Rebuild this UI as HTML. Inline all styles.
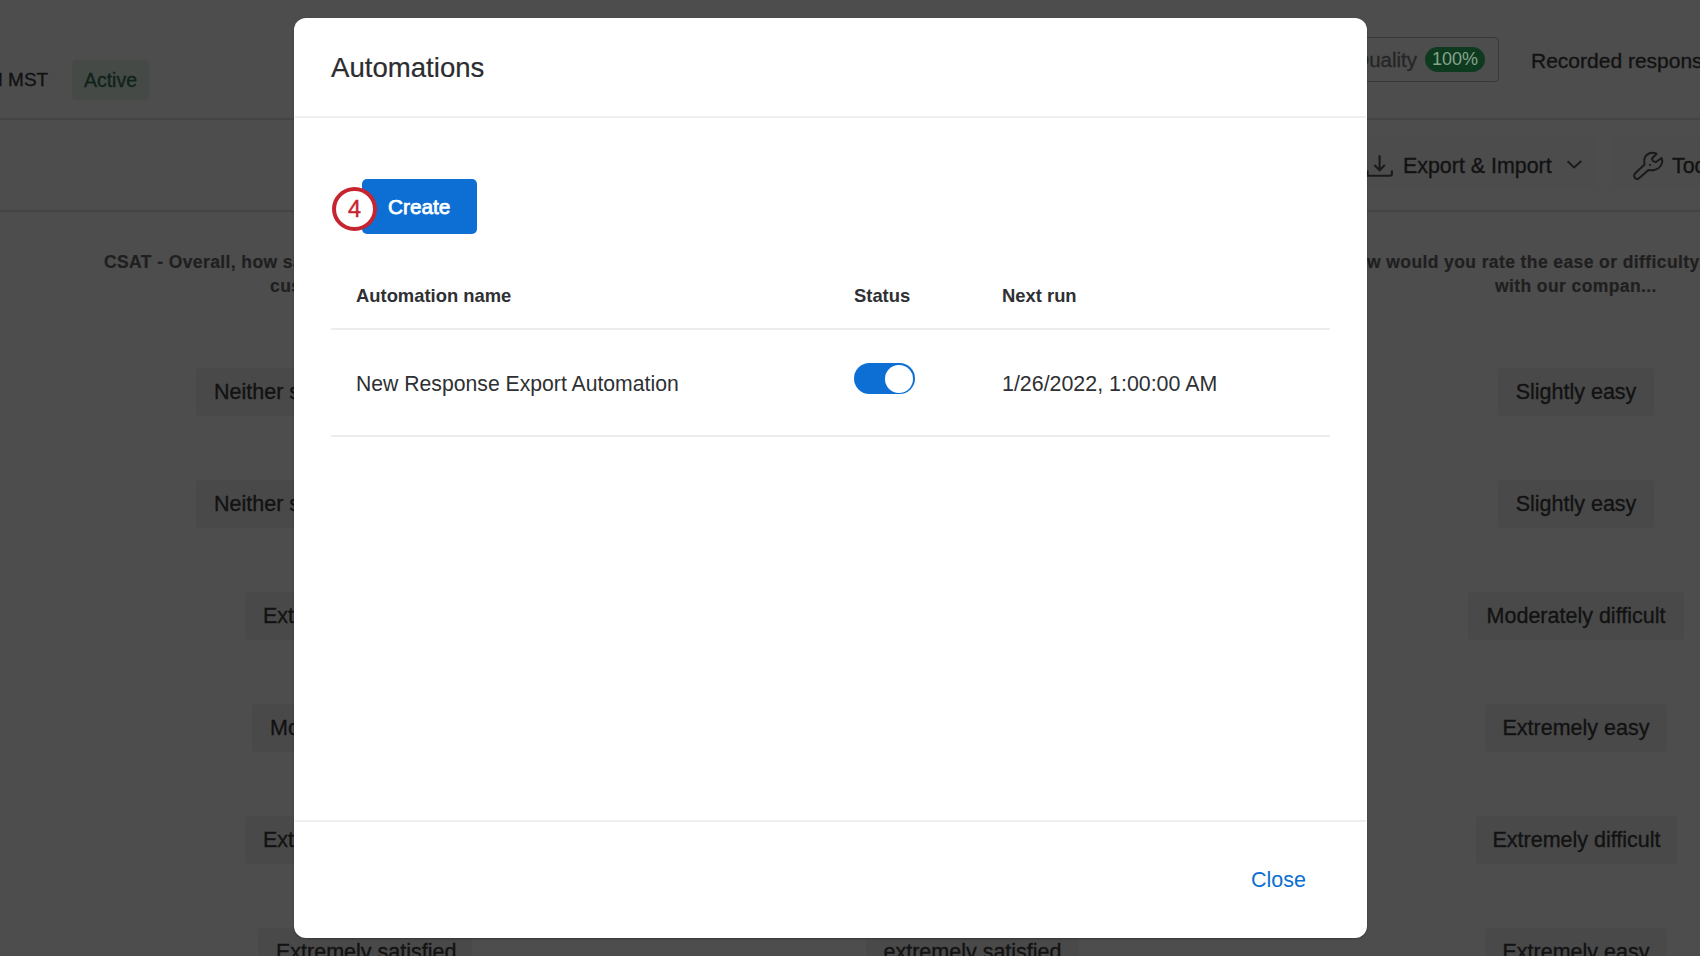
<!DOCTYPE html>
<html><head><meta charset="utf-8">
<style>
*{margin:0;padding:0;box-sizing:border-box}
html,body{width:1700px;height:956px;overflow:hidden}
body{position:relative;background:#4d4d4d;font-family:"Liberation Sans",sans-serif;color:#1c1c1c}
.bgt{-webkit-text-stroke:0.35px currentColor}
.abs{position:absolute;white-space:nowrap}
.line{position:absolute;left:0;width:1700px;height:2px;background:#444444}
.chip{-webkit-text-stroke:0.35px currentColor;position:absolute;height:48px;background:#494949;border-radius:4px;font-size:21.5px;line-height:48px;text-align:center;color:#121212;white-space:nowrap}
.hdr{-webkit-text-stroke:0.2px currentColor;position:absolute;font-weight:bold;font-size:17.5px;letter-spacing:0.4px;line-height:24px;color:#1f1f1f;text-align:center;white-space:nowrap}
/* modal */
.modal{position:absolute;left:294px;top:18px;width:1073px;height:920px;background:#fff;border-radius:12px;box-shadow:0 1px 2px rgba(0,0,0,.25)}
.mtitle{-webkit-text-stroke:0.2px currentColor;position:absolute;left:37px;top:34.5px;font-size:27.6px;line-height:30px;color:#2b2d30;white-space:nowrap}
.div{position:absolute;left:1px;width:1071px;height:2px;background:#efefef}
.btn{position:absolute;left:68px;top:161px;width:115px;height:55px;background:#0d6fd4;border-radius:5px;color:#fff;font-weight:normal;font-size:20.8px;line-height:56px;padding-left:26px;-webkit-text-stroke:0.75px #fff}
.badge{position:absolute;left:38px;top:169px;width:45px;height:44px;border-radius:50%;border:4.3px solid #c62530;background:#fff;color:#c62530;font-size:23.5px;line-height:37px;text-align:center;-webkit-text-stroke:0.4px currentColor}
.th{position:absolute;top:267px;font-weight:bold;font-size:18.4px;line-height:22px;color:#2e3033;white-space:nowrap}
.td{position:absolute;top:353px;font-size:21.2px;line-height:26px;color:#2e3033;white-space:nowrap}
.rowdiv{position:absolute;left:37px;width:999px;height:2px;background:#ededed}
.toggle{position:absolute;left:560px;top:345px;width:61px;height:31px;border-radius:16px;background:#0d6fd4}
.knob{position:absolute;right:2.5px;top:1.5px;width:28px;height:28px;border-radius:50%;background:#fff}
.close{position:absolute;left:957px;top:849px;font-size:21.5px;line-height:26px;color:#0b6fd0;white-space:nowrap}
</style></head>
<body>
<!-- background page -->
<div class="abs bgt" style="left:-13px;top:68px;font-size:19px;line-height:24px;color:#121212">M MST</div>
<div class="abs" style="left:72px;top:60px;width:77px;height:40px;background:#454a47;border-radius:5px;color:#0f2218;font-size:19.5px;line-height:40px;text-align:center;-webkit-text-stroke:0.3px currentColor">Active</div>
<div class="abs" style="left:1200px;top:37px;width:299px;height:45px;border:1.5px solid #383838;border-radius:4px"></div>
<div class="abs bgt" style="left:1290px;width:127px;text-align:right;top:48px;font-size:20.5px;line-height:24px;color:#262626">Quality</div>
<div class="abs" style="left:1425px;top:47px;width:60px;height:25px;border-radius:13px;background:#0e3b20;color:#86a28d;font-size:18px;line-height:25px;text-align:center">100%</div>
<div class="abs bgt" style="left:1531px;top:49px;font-size:21px;line-height:24px;color:#121212">Recorded responses</div>
<div class="line" style="top:118px"></div>
<div class="abs" style="left:1340px;top:136px;width:258px;height:53px;background:#4c4c4c;border-radius:4px"></div>
<div class="abs" style="left:1612px;top:136px;width:120px;height:53px;background:#4c4c4c;border-radius:4px"></div>
<svg class="abs" style="left:1366px;top:153px" width="30" height="27" viewBox="0 0 30 27"><path d="M13.6 2.2 V17 M8.4 12 L13.6 17.3 L18.8 12 M1.5 17.5 V22.8 H23.9 Q25.9 22.8 25.9 20.8 V17.6" fill="none" stroke="#1a1a1a" stroke-width="2.1" stroke-linejoin="miter" stroke-linecap="butt"/></svg>
<div class="abs bgt" style="left:1403px;top:153px;font-size:21.4px;line-height:26px;color:#121212">Export &amp; Import</div>
<svg class="abs" style="left:1564px;top:156px" width="21" height="16" viewBox="0 0 21 16"><path d="M3.6 5.3 L10.1 11.4 L17.3 5" fill="none" stroke="#1a1a1a" stroke-width="1.9" stroke-linecap="butt" stroke-linejoin="miter"/></svg>
<svg class="abs" style="left:1625px;top:145px" width="75" height="45" viewBox="0 0 75 45"><path d="M23.5 25 C27 25.5 33 25 35.5 21 C37.5 18 37.5 15 36.5 13 L31 17 C29 17 27 15.5 27 13.5 L31.5 8.7 C27 6.5 21.5 8.5 19.8 12.5 C19 14.5 19 17 19.5 19.5 L10 28.5 C8.5 30 9 33.5 11.5 34 C12.5 34.2 13.5 33.8 14 33.3 Z" fill="none" stroke="#1a1a1a" stroke-width="2" stroke-linejoin="round"/><circle cx="25" cy="19.8" r="1.1" fill="#1a1a1a"/></svg>
<div class="abs bgt" style="left:1672px;top:153px;font-size:21.4px;line-height:26px;color:#121212">Tools</div>
<div class="line" style="top:210px"></div>
<div class="hdr" style="left:104px;top:250px;text-align:left">CSAT - Overall, how satisfied are you with our</div>
<div class="hdr" style="left:270px;top:274px;text-align:left">customer service?</div>
<div class="hdr" style="left:1367px;top:250px;text-align:left">w would you rate the ease or difficulty of</div>
<div class="hdr" style="left:1495px;top:274px;text-align:left">with our compan...</div>
<div class="chip" style="left:196px;top:368px;width:345px;text-align:left;padding-left:18px">Neither satisfied nor dissatisfied</div>
<div class="chip" style="left:196px;top:480px;width:345px;text-align:left;padding-left:18px">Neither satisfied nor dissatisfied</div>
<div class="chip" style="left:245px;top:592px;width:240px;text-align:left;padding-left:18px">Extremely dissatisfied</div>
<div class="chip" style="left:252px;top:704px;width:226px;text-align:left;padding-left:18px">Moderately satisfied</div>
<div class="chip" style="left:245px;top:816px;width:240px;text-align:left;padding-left:18px">Extremely dissatisfied</div>
<div class="chip" style="left:258px;top:928px;width:214px;text-align:left;padding-left:18px">Extremely satisfied</div>
<div class="chip" style="left:1498px;top:368px;width:156px">Slightly easy</div>
<div class="chip" style="left:1498px;top:480px;width:156px">Slightly easy</div>
<div class="chip" style="left:1468px;top:592px;width:216px">Moderately difficult</div>
<div class="chip" style="left:1485px;top:704px;width:182px">Extremely easy</div>
<div class="chip" style="left:1476px;top:816px;width:201px">Extremely difficult</div>
<div class="chip" style="left:1485px;top:928px;width:182px">Extremely easy</div>
<div class="chip" style="left:866px;top:928px;width:213px">extremely satisfied</div>

<div class="modal">
  <div class="mtitle">Automations</div>
  <div class="div" style="top:98px"></div>
  <div class="btn">Create</div>
  <div class="badge">4</div>
  <div class="th" style="left:62px">Automation name</div>
  <div class="th" style="left:560px">Status</div>
  <div class="th" style="left:708px">Next run</div>
  <div class="rowdiv" style="top:310px"></div>
  <div class="td" style="left:62px">New Response Export Automation</div>
  <div class="toggle"><div class="knob"></div></div>
  <div class="td" style="left:708px;font-size:21.4px">1/26/2022, 1:00:00 AM</div>
  <div class="rowdiv" style="top:417px"></div>
  <div class="div" style="top:802px"></div>
  <div class="close">Close</div>
</div>
</body></html>
